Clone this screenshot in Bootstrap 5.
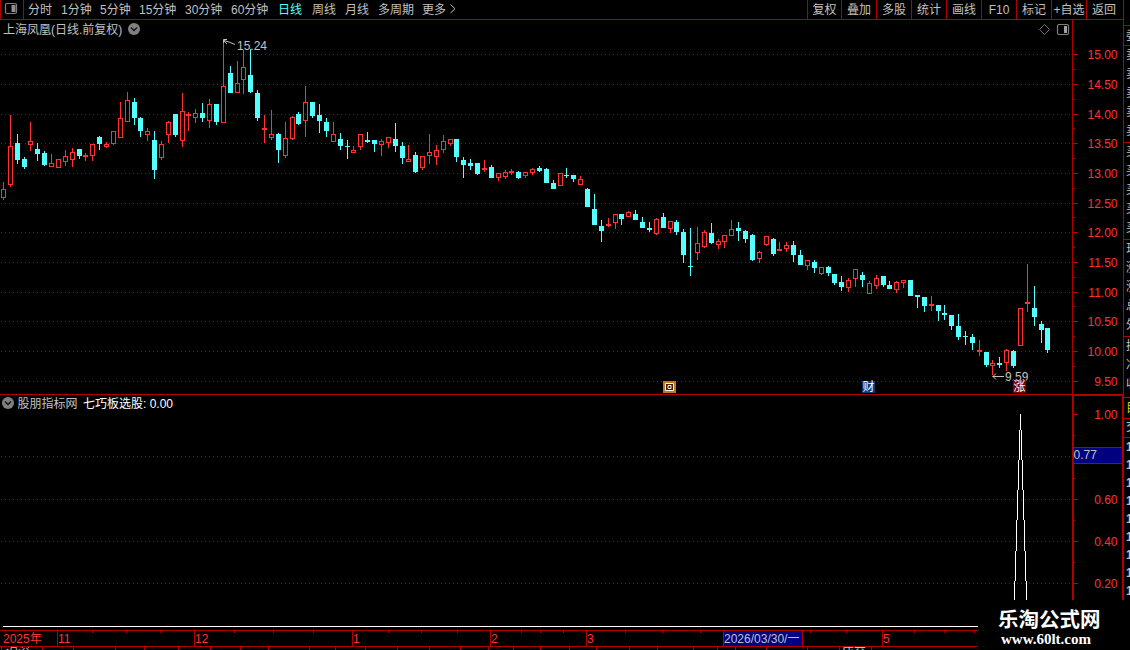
<!DOCTYPE html>
<html lang="zh-CN">
<head>
<meta charset="utf-8">
<title>上海凤凰 日线</title>
<link href="https://cdn.jsdelivr.net/npm/bootstrap@5.3.0/dist/css/bootstrap.min.css" rel="stylesheet">
<style>
:root{--line:#b00000;--ink:#c0c0c0;--up:#ff3232;--down:#54ffff}
body{width:1130px;height:650px;background:#000;color:var(--ink);font:12px/16px "Liberation Sans","Noto Sans CJK SC",sans-serif}
svg{display:block;flex:none}
svg text{font-size:12px;white-space:pre}
.main-col{width:1123px}
.toolbar{height:20px;border-bottom:1px solid var(--line);line-height:20px}
.layout-btn{width:24px;border:solid var(--line);border-width:0 1px}
.periods{display:grid;grid-template-columns:33px 39px 39px 46px 46px 47px 34px 33px 33px 44px 40px;margin-left:4px;height:19px}
.tools{display:grid;grid-template-columns:34px repeat(8,35px) 2px;width:316px;height:19px}
.tools span{border-left:1px solid var(--line);text-align:center;height:19px}
.active-period{color:var(--down)}
.dates{height:17px;width:978px;border:solid var(--line);border-width:1px 0;color:var(--up);line-height:16px}
.dates span{border-left:1px solid var(--line);flex:none;height:15px}
.dates .cursor-date{background:#000080;color:var(--ink);border-right:1px solid var(--line)}
.side{width:7px;border-left:1px solid var(--line)}
.side div{padding-left:2px;white-space:nowrap;border-top:1px solid var(--line);overflow:hidden;flex:none}
.side i{display:block;font-style:normal}
.ticker{height:3px;width:978px;line-height:10px}
.site{width:152px;height:50px;left:978px;top:600px;background:#000;color:#fff}
.site-name{font:bold 20.5px/22px "Noto Sans CJK SC",sans-serif;padding:7px 0 0 20px}
.site-url{font:bold 15px/20px "Liberation Serif",serif;padding-left:23px}
</style>
</head>
<body class="overflow-hidden d-flex position-relative">
<main class="main-col d-flex flex-column flex-shrink-0">
  <nav class="toolbar d-flex flex-shrink-0">
    <div class="layout-btn"><svg width="22" height="19"><rect x="4.5" y="3.5" width="11" height="10" rx="1.5" fill="none" stroke="#808080" stroke-width="1.2"/><rect x="10.500" y="5" width="4" height="7" fill="#909090"/></svg></div>
    <div class="periods text-nowrap"><span>分时</span><span>1分钟</span><span>5分钟</span><span>15分钟</span><span>30分钟</span><span>60分钟</span><span class="active-period">日线</span><span>周线</span><span>月线</span><span>多周期</span><span class="d-flex">更多<svg width="12" height="18"><path d="M4.500 4.500L9 8.700L4.500 13" fill="none" stroke="#c0c0c0"/></svg></span></div>
    <div class="tools ms-auto text-nowrap"><span>复权</span><span>叠加</span><span>多股</span><span>统计</span><span>画线</span><span>F10</span><span>标记</span><span>+自选</span><span>返回</span></div>
  </nav>
  <svg id="price" width="1123" height="374" viewBox="0 20 1123 374"></svg>
  <svg id="signal" width="1123" height="236" viewBox="0 394 1123 236"></svg>
  <div class="dates d-flex position-relative text-nowrap">
    <span class="border-start-0" style="width:57px;text-indent:3px">2025年</span><span style="width:137px">11</span><span style="width:158px">12</span><span style="width:138px">1</span><span style="width:96px">2</span><span style="width:137px">3</span><span class="cursor-date" style="width:80px">2026/03/30/一</span><span class="border-start-0" style="width:79px"></span><span style="width:90px">5</span>
    <svg id="ticks" class="position-absolute top-0 start-0" width="978" height="19" overflow="visible"></svg>
  </div>
  <div class="ticker d-flex overflow-hidden"><span style="width:838px;padding-left:6px">沪深</span><span class="active-period ps-1">成交</span></div>
</main>
<aside class="side d-flex flex-column overflow-hidden">
  <div style="height:20px;margin-top:25px;padding-top:2px">委</div>
  <div style="height:97px;line-height:19px"><i>卖</i><i>卖</i><i>卖</i><i>卖</i><i>卖</i></div>
  <div style="height:97px;line-height:19px"><i>买</i><i>买</i><i>买</i><i>买</i><i>买</i></div>
  <div style="height:97px;line-height:19px"><i>现</i><i>涨</i><i>涨</i><i>总</i><i>外</i></div>
  <div style="height:61px;line-height:19px"><i>换</i><i>净</i><i>收</i></div>
  <div style="height:21px;line-height:20px;color:#d0d000">目</div>
  <div style="height:19px">交</div>
  <div class="fw-bold" style="height:213px;line-height:18px"><i>1</i><i>1</i><i>1</i><i>1</i><i>1</i><i>1</i><i>1</i><i>1</i><i>1</i></div>
</aside>
<div class="site position-absolute text-nowrap"><div class="site-name">乐淘公式网</div><div class="site-url">www.60lt.com</div></div>
<script src="https://cdn.jsdelivr.net/npm/bootstrap@5.3.0/dist/js/bootstrap.bundle.min.js"></script>
<script>
const RED='#b00000', INK='#c0c0c0', UP='#ff3232', DOWN='#54ffff';
const rect=(x,y,w,h,f)=>`<rect x="${x}" y="${y}" width="${w}" height="${h}" fill="${f}"/>`;
const text=(x,y,s,f,extra='')=>`<text x="${x}" y="${y}" fill="${f}" ${extra}>${s}</text>`;
const grid=(y)=>`<path d="M1 ${y}.5H1072" stroke="#b00000" stroke-dasharray="1 3" shape-rendering="crispEdges"/>`;
const toggle=(x,y)=>`<circle cx="${x}" cy="${y}" r="6" fill="#808080"/><path d="M${x-3} ${y-1.5}l3 3l3 -3" fill="none" stroke="#111" stroke-width="1.4"/>`;

// high, body top, body bottom, low, direction (u = rising, d = falling)
const candles=`182 189 198 200 u,115 146 185 187 u,134 143 160 164 d,157 159 167 169 d,122 141 145 151 u,143 149 154 161 d,151 153 165 166 d,154 163 167 167 u,159 159 168 168 u,150 156 162 166 u,148 152 160 167 u,149 149 156 159 d,153 155 157 161 u,144 144 156 161 u,136 137 144 150 d,142 144 147 148 u,131 131 144 145 u,102 118 138 138 u,92 100 122 122 u,98 102 118 125 d,117 118 131 137 d,128 131 135 141 u,131 140 170 179 d,141 144 158 160 u,121 122 135 143 u,114 114 135 137 d,93 111 141 147 u,112 114 116 131 u,109 113 118 123 u,103 113 118 122 d,99 104 121 128 u,104 104 122 125 d,43 86 123 123 u,66 73 93 93 d,61 83 93 93 u,50 67 80 94 u,49 75 92 93 d,90 93 118 121 d,115 128 130 143 u,110 134 138 140 u,133 134 150 163 d,122 138 156 158 u,116 117 139 140 u,112 114 124 125 d,86 102 121 137 u,102 102 116 118 d,104 115 121 133 d,118 122 131 137 d,122 134 142 142 u,133 139 146 150 d,140 146 147 159 d,146 150 153 153 u,134 134 147 150 u,132 140 142 143 d,140 140 144 152 d,139 141 145 156 u,137 137 143 148 u,123 139 146 152 d,142 146 158 164 d,145 159 162 162 u,152 155 172 173 d,156 156 168 170 u,134 152 156 164 u,145 150 157 165 u,135 141 150 153 u,139 139 144 146 u,139 139 157 162 d,157 160 165 178 d,159 163 166 170 d,163 163 174 175 d,160 168 170 172 u,165 167 178 178 d,173 173 178 181 u,170 172 177 179 u,169 171 173 175 u,171 172 178 179 d,172 172 176 178 u,168 169 173 175 u,166 168 171 172 d,168 169 183 183 d,180 183 189 189 d,173 173 186 186 u,168 175 176 178 d,175 175 179 182 d,176 179 185 185 u,188 189 207 207 d,194 209 225 225 d,220 226 231 242 d,218 224 226 227 u,214 214 223 229 u,214 214 219 225 d,211 212 217 217 u,210 214 220 220 d,217 222 228 228 d,222 228 230 232 d,218 219 234 235 u,213 217 228 228 d,221 221 229 233 u,220 222 232 235 d,229 232 255 263 d,228 266 267 276 d,227 243 253 260 u,230 232 247 248 u,223 233 243 244 d,239 241 245 249 u,235 235 242 248 u,220 229 236 236 u,222 228 231 241 d,230 231 239 243 d,234 235 260 261 d,251 252 259 263 u,236 236 245 246 u,238 239 254 256 d,242 249 251 251 u,242 245 249 252 u,241 245 255 262 d,250 255 265 265 d,260 260 266 270 u,260 262 268 273 d,267 267 274 275 u,266 267 273 276 d,274 274 283 285 d,276 282 287 291 d,278 280 288 292 u,269 269 279 287 u,272 275 280 287 d,281 283 294 294 u,275 278 286 289 u,276 276 285 287 d,281 285 289 289 d,281 282 290 293 u,280 280 283 288 u,280 280 296 296 d,295 295 297 308 d,297 297 306 312 d,296 304 306 311 u,305 305 311 321 d,305 313 315 320 d,315 315 326 330 d,314 326 337 340 d,331 336 337 345 d,334 337 343 350 d,340 350 352 356 u,352 352 365 367 d,360 363 366 375 u,357 363 365 368 d,349 350 363 371 u,350 351 366 368 d,308 308 346 346 u,264 302 304 312 u,286 308 317 326 d,321 324 330 343 d,328 328 350 353 d`.split(',').map(s=>s.split(' '));

const gy=[54,84,114,143,173,203,232,262,292,321,351,381];
let p=text(3,34,'上海凤凰(日线.前复权)',INK)+toggle(134,29);
p+=`<path d="M1044.500 24.500l5 5l-5 5l-5 -5z" fill="none" stroke="#707070"/><rect x="1057.500" y="24.500" width="11" height="10" rx="1.500" fill="none" stroke="#808080" stroke-width="1.200"/>`+rect(1064,26,3,7,'#a0a0a0');
p+=rect(1072,20,1,374,RED);
gy.forEach((y,i)=>{
  p+=grid(y)+rect(1073,y,5,1,RED)+text(1117.500,y+5,(15-i*.5).toFixed(2),UP,'text-anchor="end"');
  if(i<11) p+=rect(1073,Math.floor((y+gy[i+1])/2),2,1,RED);
});
candles.forEach(([h,t,b,l,k],i)=>{
  const x=3+7*i-(Math.floor((i-3.6)/7.79)+1), c=k==='u'?UP:DOWN;
  if(k==='d'||b-t<3){ p+=rect(x,h,1,l-h,c)+rect(x-2,t,5,b-t,c); }
  else p+=rect(x,h,1,t-h,c)+rect(x,b,1,l-b,c)+`<rect x="${x-1.5}" y="${+t+.5}" width="4" height="${b-t-1}" fill="none" stroke="${c}"/>`;
});
p+=`<path d="M227 39.500H223.500V43M223.500 40.500L227 44M224 40.500L229 42L235 44.500M1004 376.500H992.500M996 373.500l-3 3l3 3" fill="none" stroke="${INK}"/>`;
p+=text(237,50,'15.24',INK)+text(1005,381,'9.59',INK);
p+=rect(663,381,13,12,'#c07820')+`<path d="M665.500 383.500h8v7h-8zM668 385.500h3v3h-3z" fill="#402000" stroke="#fff"/>`;
p+=rect(862,381,13,12,'#003c80')+text(862.500,391,'财',"#fff");
p+=rect(1013,380,13,13,'#800000')+text(1013.500,391,'涨','#fff');
document.getElementById('price').innerHTML=p;

let s=rect(0,394,1123,1,RED)+rect(1072,394,51,2,RED)+rect(1072,394,2,206,RED)+rect(1122,394,1,206,RED);
s+=toggle(8,403)+text(17.500,408,'股朋指标网',INK)+text(83,408,'七巧板选股: 0.00','#fff');
[456,499,541,583].forEach(y=>s+=grid(y)+rect(1074,y,4,1,RED));
[435,478,520,562].forEach(y=>s+=rect(1074,y,1,1,RED));
[[414,'1.00'],[499,'0.60'],[541,'0.40'],[583,'0.20']].forEach(([y,v])=>s+=text(1117.500,y+5,v,UP,'text-anchor="end"'));
s+=rect(1074,414,4,1,RED)+rect(1074,447,48,17,RED)+rect(1074,448,48,15,'#000080')+text(1073.500,459,'0.77',INK);
// signal spike widens by one pixel on each side per step
[414,430,460,490,520,551,581,600].forEach((y,i,a)=>{ if(i<7) s+=rect(1020-i,y,1,a[i+1]-y,'#fff')+rect(1020+i,y,1,a[i+1]-y,'#fff'); });
s+=rect(3,626,975,1,'#fff');
document.getElementById('signal').innerHTML=s;

document.getElementById('ticks').innerHTML=
 [92,126,160,234,273,313,388,421,457,521,540,563,625,662,700,810,846,914,944,974].map(x=>rect(x,0,1,2,RED)).join('')+
 [1,42,73,115,144,178,210,240,268,309,335,365,397,429,460,488,513,540,569,596,629,657,693,717,735,766,807,839,871].map(x=>rect(x,16,1,3,RED)).join('');
</script>
</body>
</html>
